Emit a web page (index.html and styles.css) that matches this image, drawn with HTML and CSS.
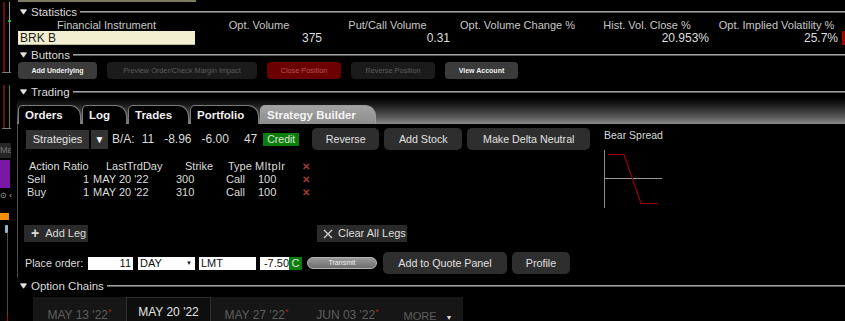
FILE: index.html
```html
<!DOCTYPE html>
<html>
<head>
<meta charset="utf-8">
<link rel="stylesheet" href="styles.css">
</head>
<body>
<div class="app">
  <div class="side">
    <div class="meter meter-a"><span class="m-red"></span><span class="m-grey"><i class="m-green"></i></span></div>
    <div class="meter meter-b"><span class="m-red"></span><span class="m-greenline"></span></div>
    <div class="side-label">Mε</div>
    <div class="side-purple"></div>
    <div class="side-icon">⊙ ‹</div>
    <div class="side-orange"></div>
    <div class="side-blue"></div>
    <div class="side-track"><span class="side-red"></span></div>
  </div>

  <div class="main">
    <div class="topstrip"></div>

    <div class="sec sec-stats">
      <svg class="tri" width="7" height="6" viewBox="0 0 7 6"><path d="M0.5 0.8 H6.5 L3.5 5.2 Z" fill="#e6e6e6" stroke="#e6e6e6" stroke-width="0.8" stroke-linejoin="round"/></svg>
      <span class="sec-title">Statistics</span><span class="sec-line"></span>
    </div>

    <div class="stats">
      <div class="sh">Financial Instrument</div>
      <div class="sh">Opt. Volume</div>
      <div class="sh">Put/Call Volume</div>
      <div class="sh">Opt. Volume Change %</div>
      <div class="sh">Hist. Vol. Close %</div>
      <div class="sh">Opt. Implied Volatility %</div>
      <div class="sh"></div>
      <div class="sym">BRK B</div>
      <div class="sv sv-a">375</div>
      <div class="sv sv-b">0.31</div>
      <div class="sv"></div>
      <div class="sv sv-b">20.953%</div>
      <div class="sv sv-last">25.7%</div>
      <div class="sv-flag"></div>
    </div>

    <div class="sec sec-buttons">
      <svg class="tri" width="7" height="6" viewBox="0 0 7 6"><path d="M0.5 0.8 H6.5 L3.5 5.2 Z" fill="#e6e6e6" stroke="#e6e6e6" stroke-width="0.8" stroke-linejoin="round"/></svg>
      <span class="sec-title">Buttons</span><span class="sec-line"></span>
    </div>

    <div class="btnrow">
      <div class="sbtn on w-add">Add Underlying</div>
      <div class="sbtn off w-prev">Preview Order/Check Margin Impact</div>
      <div class="sbtn danger w-close">Close Position</div>
      <div class="sbtn off w-rev">Reverse Position</div>
      <div class="sbtn on w-view">View Account</div>
    </div>

    <div class="sec sec-trading">
      <svg class="tri" width="7" height="6" viewBox="0 0 7 6"><path d="M0.5 0.8 H6.5 L3.5 5.2 Z" fill="#e6e6e6" stroke="#e6e6e6" stroke-width="0.8" stroke-linejoin="round"/></svg>
      <span class="sec-title">Trading</span><span class="sec-line"></span>
    </div>

    <div class="tabbar">
      <div class="tab t-orders">Orders</div>
      <div class="tab t-log">Log</div>
      <div class="tab t-trades">Trades</div>
      <div class="tab t-port">Portfolio</div>
      <div class="tab t-sb active">Strategy Builder</div>
    </div>

    <div class="panel">
      <div class="panel-left">
        <div class="strow">
          <div class="strat-btn">Strategies</div>
          <div class="strat-dd">▼</div>
          <span class="ba ba-lbl">B/A:</span>
          <span class="ba ba-11">11</span>
          <span class="ba ba-b">-8.96</span>
          <span class="ba ba-a">-6.00</span>
          <span class="ba ba-47">47</span>
          <span class="credit">Credit</span>
          <div class="gbtn g-rev">Reverse</div>
          <div class="gbtn g-stock">Add Stock</div>
          <div class="gbtn g-delta">Make Delta Neutral</div>
        </div>

        <div class="legs">
          <div class="lrow lhead">
            <span>Action</span><span>Ratio</span><span>LastTrdDay</span><span>Strike</span><span>Type</span><span class="mlt">Mltplr</span><span class="x">✕</span>
          </div>
          <div class="lrow lbody">
            <span>Sell</span><span>1</span><span>MAY 20 '22</span><span>300</span><span>Call</span><span>100</span><span class="x">✕</span>
          </div>
          <div class="lrow lbody">
            <span>Buy</span><span>1</span><span>MAY 20 '22</span><span>310</span><span>Call</span><span>100</span><span class="x">✕</span>
          </div>
        </div>

        <div class="legbtns">
          <div class="lbtn l-add"><span class="plus">+</span>Add Leg</div>
          <div class="lbtn l-clear"><svg width="10" height="10" viewBox="0 0 10 10"><path d="M1 1 L9 9 M9 1 L1 9" stroke="#cfcfcf" stroke-width="1.3"/></svg>Clear All Legs</div>
        </div>

        <div class="orow">
          <span class="o-lbl">Place order:</span>
          <div class="inp i-qty">11</div>
          <div class="inp i-day">DAY<span class="caret">▼</span></div>
          <div class="inp i-lmt">LMT</div>
          <div class="inp i-px">-7.50</div>
          <div class="c-box">C</div>
          <div class="transmit">Transmit</div>
          <div class="gbtn g-quote">Add to Quote Panel</div>
          <div class="gbtn g-prof">Profile</div>
        </div>
      </div>

      <div class="panel-right">
        <div class="bs-title">Bear Spread</div>
        <svg class="bs-chart" width="62" height="60" viewBox="0 0 62 60">
          <line x1="0.5" y1="0" x2="0.5" y2="58" stroke="#8a8a8a" stroke-width="1"/>
          <line x1="0" y1="28.5" x2="58" y2="28.5" stroke="#9a9a9a" stroke-width="1"/>
          <polyline points="4,4.5 20,4.5 37,53.5 54,53.5" fill="none" stroke="#a00000" stroke-width="1.2"/>
        </svg>
      </div>
    </div>

    <div class="sec sec-chains">
      <svg class="tri" width="7" height="6" viewBox="0 0 7 6"><path d="M0.5 0.8 H6.5 L3.5 5.2 Z" fill="#e6e6e6" stroke="#e6e6e6" stroke-width="0.8" stroke-linejoin="round"/></svg>
      <span class="sec-title">Option Chains</span><span class="sec-line"></span>
    </div>

    <div class="ctabs">
      <div class="ctab c1">MAY 13 '22<sup>*</sup></div>
      <div class="ctab c2 cur">MAY 20 '22</div>
      <div class="ctab c3">MAY 27 '22<sup>*</sup></div>
      <div class="ctab c4">JUN 03 '22<sup>*</sup></div>
      <div class="ctab c5 more">MORE <span class="more-caret">▼</span></div>
    </div>
  </div>
</div>
</body>
</html>
```

FILE: styles.css
```css
* { box-sizing: border-box; margin: 0; padding: 0; }
html, body { background: #000; }
body {
  width: 845px;
  height: 321px;
  overflow: hidden;
  font-family: "Liberation Sans", Arial, sans-serif;
  font-size: 11px;
  color: #d6d6d6;
}
.app { display: flex; height: 321px; overflow: hidden; }

/* ---------- left strip ---------- */
.side { width: 17px; flex: none; display: flex; flex-direction: column; }
.side > * { flex: none; }
.meter { display: flex; margin-left: 2px; width: 9px; border-bottom: 1px solid #777; }
.meter-a { height: 71px; margin-top: 2px; }
.meter-b { height: 44px; margin-top: 12px; }
.m-red { width: 2px; margin-left: 1px; background: #6a0d0d; }
.m-grey { position: relative; width: 1px; margin-left: 4px; background: #9a9a9a; }
.m-green { position: absolute; left: -1px; top: 18px; width: 3px; height: 2px; background: #2bb52b; }
.m-greenline { width: 1px; margin-left: 4px; background: #2f8f2f; }
.side-label { margin-top: 14px; height: 15px; width: 11px; background: #262626; color: #777; font-size: 9px; line-height: 15px; overflow: hidden; white-space: nowrap; }
.side-purple { margin-top: 2px; height: 28px; width: 10px; background: #7a17a6; }
.side-icon { margin-top: 2px; height: 11px; width: 12px; color: #bbb; font-size: 8px; line-height: 11px; overflow: hidden; white-space: nowrap; }
.side-orange { margin-top: 12px; height: 7px; width: 9px; background: #f39000; }
.side-blue { margin-top: 5px; margin-left: 5px; height: 8px; width: 3px; background: #8fb8d0; border-radius: 1px; }
.side .side-track { flex: 1 1 auto; margin-left: 7px; width: 1px; background: #4a4a4a; display: flex; flex-direction: column; justify-content: flex-end; }
.side-red { height: 6px; background: #b00000; }

/* ---------- main ---------- */
.main { flex: 1; min-width: 0; display: flex; flex-direction: column; }
.main > * { flex: none; }
.topstrip { height: 2px; width: 178px; margin-left: 1px; background: #7d7b62; }

.sec { display: flex; align-items: center; height: 14px; }
.tri { margin-left: 3px; flex: none; }
.sec-title { margin-left: 4px; font-size: 11.5px; color: #dcdcdc; white-space: nowrap; }
.sec-line { flex: 1; height: 2px; margin-left: 3px; background: #a4a4a4; border-bottom: 1px solid #5a5a5a; }
.sec-stats { margin-top: 3px; }
.sec-buttons { margin-top: 3px; }
.sec-trading { margin-top: 6px; }
.sec-chains { margin-top: 1px; }

/* statistics */
.stats {
  display: grid;
  grid-template-columns: 177px 128px 129px 131px 128px 131px 3px;
  grid-template-rows: 12px 14px;
  margin-left: 1px;
}
.sh { text-align: center; color: #c8c8c8; font-size: 11px; line-height: 12px; white-space: nowrap; }
.sym { background: #f1efcf; color: #1e1e1e; font-size: 12px; line-height: 14px; padding-left: 2px; border-bottom: 1px solid #b9b79a; }
.sv { text-align: right; font-size: 12px; line-height: 14px; color: #dedede; }
.sv-a { padding-right: 1px; }
.sv-b { padding-right: 2px; }
.sv-last { padding-right: 4px; }
.sv-flag { background: #a00000; }

/* buttons row */
.btnrow { display: flex; gap: 10px; margin-left: 1px; height: 17px; }
.sbtn { height: 17px; border-radius: 4px; font-size: 7.3px; line-height: 17px; text-align: center; white-space: nowrap; }
.sbtn.on { background: #3b3b3b; color: #f2f2f2; font-weight: bold; font-size: 7px; }
.sbtn.off { background: #1b1b1b; color: #5c5c5c; }
.sbtn.danger { background: #6c0000; color: #b45656; }
.w-add { width: 79px; }
.w-prev { width: 150px; }
.w-close { width: 74px; }
.w-rev { width: 84px; }
.w-view { width: 73px; }

/* tabs */
.tabbar {
  height: 26px;
  margin-top: -1px;
  display: flex;
  align-items: flex-end;
  background: linear-gradient(to bottom, #000 0%, #1a1a1a 25%, #5a5a5a 75%, #8a8a8a 100%);
  padding-left: 1px;
}
.tab {
  height: 19px;
  border: 1px solid #7a7a7a;
  border-bottom: none;
  border-radius: 5px 11px 0 0;
  background: #000;
  color: #f0f0f0;
  font-weight: bold;
  font-size: 11.5px;
  line-height: 18px;
  padding-left: 6px;
  white-space: nowrap;
}
.t-orders { width: 63px; }
.t-log { width: 45px; margin-left: 1px; }
.t-trades { width: 61px; margin-left: 1px; }
.t-port { width: 69px; margin-left: 1px; }
.t-sb { width: 116px; margin-left: 1px; }
.tab.active { background: linear-gradient(to bottom, #a4a4a4, #8c8c8c); border-color: #9c9c9c; color: #f4f4f4; }

/* panel */
.panel { height: 154px; border-left: 1px solid #4e4e4e; display: flex; }
.panel-left { width: 586px; flex: none; }

.strow { display: flex; align-items: center; margin-top: 4px; height: 22px; }
.strat-btn { margin-left: 8px; width: 63px; height: 19px; background: #333; color: #e4e4e4; font-size: 11px; line-height: 19px; text-align: center; }
.strat-dd { margin-left: 2px; width: 17px; height: 19px; background: #333; color: #fff; font-size: 10px; line-height: 19px; text-align: center; }
.ba { font-size: 12px; color: #dadada; white-space: nowrap; }
.ba-lbl { margin-left: 4px; }
.ba-11 { margin-left: 7px; }
.ba-b { margin-left: 10px; }
.ba-a { margin-left: 10px; }
.ba-47 { margin-left: 15px; }
.credit { margin-left: 6px; height: 13px; width: 36px; background: #0b7d0b; color: #d8e8d8; font-size: 10.5px; line-height: 13px; text-align: center; }
.gbtn { height: 22px; border-radius: 5px; background: #2e2e2e; color: #e0e0e0; font-size: 10.7px; line-height: 22px; text-align: center; white-space: nowrap; }
.g-rev { margin-left: 13px; width: 67px; }
.g-stock { margin-left: 5px; width: 78px; }
.g-delta { margin-left: 5px; width: 123px; }

.legs { margin-top: 10px; }
.lrow { display: grid; height: 13px; line-height: 13px; font-size: 11px; color: #dcdcdc; white-space: nowrap; }
.lhead { grid-template-columns: 34px 43px 79px 43px 27px 47px 12px; padding-left: 11px; }
.lbody { grid-template-columns: 56px 10px 83px 50px 32px 44px 12px; padding-left: 9px; }
.mlt { letter-spacing: 0.6px; }
.x { color: #a33a3a; font-size: 10px; font-weight: bold; }

.legbtns { display: flex; margin-top: 26px; height: 17px; }
.lbtn { height: 17px; background: #2a2a2a; color: #dcdcdc; font-size: 11px; line-height: 17px; display: flex; align-items: center; white-space: nowrap; }
.l-add { margin-left: 6px; width: 64px; }
.plus { margin-left: 7px; margin-right: 6px; font-size: 14px; font-weight: bold; line-height: 17px; }
.l-clear { margin-left: 229px; width: 90px; }
.l-clear svg { margin-left: 6px; margin-right: 5px; }

.orow { display: flex; align-items: center; margin-top: 10px; height: 22px; }
.o-lbl { margin-left: 7px; font-size: 10.8px; color: #dcdcdc; width: 63px; white-space: nowrap; }
.inp { height: 13px; background: #fff; color: #111; font-size: 11px; line-height: 13px; white-space: nowrap; }
.i-qty { width: 45px; text-align: right; padding-right: 2px; }
.i-day { width: 57px; margin-left: 5px; padding-left: 2px; display: flex; justify-content: space-between; }
.caret { font-size: 6px; padding-right: 3px; }
.i-lmt { width: 57px; margin-left: 4px; padding-left: 2px; }
.i-px { width: 29px; margin-left: 4px; text-align: right; }
.c-box { width: 13px; height: 13px; background: #0b7d0b; color: #e0e0e0; font-size: 11px; line-height: 13px; text-align: center; }
.transmit {
  margin-left: 5px; width: 70px; height: 12px; border-radius: 6px;
  background: linear-gradient(to bottom, #9a9a9a, #6e6e6e);
  border: 1px solid #b4b4b4;
  color: #f0f0f0; font-size: 7px; line-height: 10px; text-align: center;
}
.g-quote { margin-left: 6px; width: 124px; }
.g-prof { margin-left: 5px; width: 58px; }

.bs-title { margin-top: 5px; line-height: 12px; font-size: 10.5px; color: #dcdcdc; white-space: nowrap; }
.bs-chart { display: block; margin-top: 9px; }

/* chain tabs */
.ctabs { display: flex; margin-left: 16px; margin-top: 4px; height: 24px; }
.ctab { height: 24px; background: #161616; color: #5e5e5e; font-size: 12px; line-height: 30px; text-align: center; white-space: nowrap; }
.ctab sup { color: #a52323; font-size: 9px; vertical-align: 4px; }
.c1 { width: 93px; }
.c2 { width: 85px; }
.c3 { width: 91px; }
.c4 { width: 91px; }
.c5 { width: 70px; }
.ctab.cur { background: #0e0e0e; color: #e4e4e4; border: 1px solid #2e2e2e; border-bottom: none; line-height: 28px; }
.more { line-height: 38px; font-size: 11px; }
.more-caret { font-size: 7px; margin-left: 6px; color: #ddd; }
```
